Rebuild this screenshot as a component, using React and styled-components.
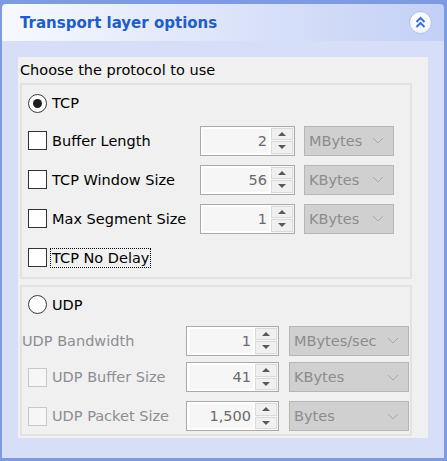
import React from 'react'
import styled, { createGlobalStyle } from 'styled-components'

const GlobalStyle = createGlobalStyle`
  body {
    margin: 0;
    font-family: "DejaVu Sans", sans-serif;
  }
`

const Frame = styled.div`
  width: 447px;
  height: 461px;
  box-sizing: border-box;
  background: #7c9be2;
  padding: 4px 3px 3px 2px;
  display: flex;
  flex-direction: column;
`

const Header = styled.div`
  height: 37px;
  flex: none;
  display: flex;
  align-items: center;
  justify-content: space-between;
  padding: 0 12px 0 18px;
  border-radius: 4px 4px 0 0;
  background: linear-gradient(to right, #f7f9fe, #c3d0f6);
`

const Title = styled.div`
  font-weight: bold;
  font-size: 15px;
  color: #215dc6;
`

const CollapseButton = styled.div`
  width: 23px;
  height: 23px;
  box-sizing: border-box;
  border-radius: 50%;
  border: 1px solid #b3c0e2;
  background: radial-gradient(circle at 40% 35%, #ffffff, #edf1fb);
  display: flex;
  align-items: center;
  justify-content: center;
`

const Body = styled.div`
  flex: 1;
  background: #d6dff7;
  padding: 16px 16px 20px 16px;
  display: flex;
  flex-direction: column;
`

const Panel = styled.div`
  flex: 1;
  background: #f0f0f0;
  padding: 0 16px 2px 2px;
  display: flex;
  flex-direction: column;
`

const Prompt = styled.div`
  height: 26px;
  line-height: 26px;
  font-size: 14.5px;
  color: #000;
`

const Group = styled.div`
  border: 2px solid #e2e2e2;
  margin-top: ${p => p.$mt || 0}px;
  display: flex;
  flex-direction: column;
`

const Row = styled.div`
  height: ${p => p.$h}px;
  margin-top: ${p => p.$mt || 0}px;
  padding-left: ${p => (p.$pl === undefined ? 6 : p.$pl)}px;
  display: flex;
  align-items: center;
  flex: none;
`

const LabelCell = styled.div`
  width: ${p => p.$w}px;
  flex: none;
  display: flex;
  align-items: center;
  gap: 5px;
`

const Label = styled.span`
  font-size: 14.5px;
  color: ${p => (p.$disabled ? '#8d8d93' : '#000')};
  white-space: nowrap;
  ${p => p.$focus && 'outline: 1px dotted #000; outline-offset: 1px;'}
`

const Box = styled.div`
  width: 19px;
  height: 19px;
  box-sizing: border-box;
  flex: none;
  border: 1.5px solid ${p => (p.$disabled ? '#c8c8c8' : '#333')};
  background: ${p => (p.$disabled ? '#f6f6f6' : '#fff')};
`

const Radio = styled.div`
  width: 19px;
  height: 19px;
  box-sizing: border-box;
  flex: none;
  border-radius: 50%;
  border: 1.5px solid #3a3a3a;
  background: #fff;
  display: flex;
  align-items: center;
  justify-content: center;
  &::after {
    content: '';
    display: ${p => (p.$checked ? 'block' : 'none')};
    width: 9px;
    height: 9px;
    border-radius: 50%;
    background: #1e1e1e;
  }
`

const Spin = styled.div`
  width: ${p => p.$w}px;
  height: 30px;
  box-sizing: border-box;
  flex: none;
  border: 1px solid #aaaaaa;
  background: #f6f6f6;
  display: flex;
`

const SpinField = styled.div`
  flex: 1;
  box-shadow: inset 0 0 0 2px #fff;
  text-align: right;
  padding-right: 4px;
  font-size: 14.5px;
  line-height: 28px;
  color: #6a6a6a;
`

const SpinButtons = styled.div`
  width: 22px;
  padding: 1px 1px 1px 0;
  display: flex;
  flex-direction: column;
  gap: 1px;
`

const SpinButton = styled.div`
  flex: 1;
  background: #f0f0f0;
  border: 1px solid #dadada;
  display: flex;
  align-items: center;
  justify-content: center;
  &::after {
    content: '';
    border-left: 4px solid transparent;
    border-right: 4px solid transparent;
    ${p =>
      p.$down
        ? 'border-top: 4px solid #5a5a5a;'
        : 'border-bottom: 4px solid #5a5a5a;'}
  }
`

const Combo = styled.div`
  width: ${p => p.$w}px;
  height: 30px;
  box-sizing: border-box;
  flex: none;
  margin-left: ${p => p.$gap}px;
  border: 1px solid #b6b6b6;
  background: #d0d0d0;
  display: flex;
  align-items: center;
  justify-content: space-between;
  padding: 0 9px 0 4px;
  font-size: 14.5px;
  color: #8c8c8c;
`

const Chevron = () => (
  <svg width="12" height="7" viewBox="0 0 12 7">
    <path d="M1 1 L6 6 L11 1" fill="none" stroke="#a9a9a9" strokeWidth="1" />
  </svg>
)

const DoubleUp = () => (
  <svg width="13" height="13" viewBox="0 0 13 13">
    <path
      d="M2.5 6 L6.5 2 L10.5 6 M2.5 11 L6.5 7 L10.5 11"
      fill="none"
      stroke="#3a6fd6"
      strokeWidth="2"
    />
  </svg>
)

const NumberBox = ({ value, width }) => (
  <Spin $w={width}>
    <SpinField>{value}</SpinField>
    <SpinButtons>
      <SpinButton />
      <SpinButton $down />
    </SpinButtons>
  </Spin>
)

const tcpOptions = [
  { label: 'Buffer Length', value: '2', unit: 'MBytes' },
  { label: 'TCP Window Size', value: '56', unit: 'KBytes' },
  { label: 'Max Segment Size', value: '1', unit: 'KBytes' },
]

const udpOptions = [
  { label: 'UDP Buffer Size', value: '41', unit: 'KBytes', h: 36 },
  { label: 'UDP Packet Size', value: '1,500', unit: 'Bytes', h: 36, mt: 3 },
]

const App = () => (
  <Frame>
    <GlobalStyle />
    <Header>
      <Title>Transport layer options</Title>
      <CollapseButton>
        <DoubleUp />
      </CollapseButton>
    </Header>
    <Body>
      <Panel>
        <Prompt>Choose the protocol to use</Prompt>
        <Group>
          <Row $h={36}>
            <LabelCell $w={172}>
              <Radio $checked />
              <Label>TCP</Label>
            </LabelCell>
          </Row>
          {tcpOptions.map(opt => (
            <Row $h={39} key={opt.label}>
              <LabelCell $w={172}>
                <Box />
                <Label>{opt.label}</Label>
              </LabelCell>
              <NumberBox value={opt.value} width={95} />
              <Combo $w={90} $gap={9}>
                {opt.unit}
                <Chevron />
              </Combo>
            </Row>
          ))}
          <Row $h={39}>
            <LabelCell $w={172}>
              <Box />
              <Label $focus>TCP No Delay</Label>
            </LabelCell>
          </Row>
        </Group>
        <Group $mt={6}>
          <Row $h={35}>
            <LabelCell $w={158}>
              <Radio />
              <Label>UDP</Label>
            </LabelCell>
          </Row>
          <Row $h={37} $pl={0}>
            <LabelCell $w={164}>
              <Label $disabled>UDP Bandwidth</Label>
            </LabelCell>
            <NumberBox value="1" width={93} />
            <Combo $w={120} $gap={10}>
              MBytes/sec
              <Chevron />
            </Combo>
          </Row>
          {udpOptions.map(opt => (
            <Row $h={opt.h} $mt={opt.mt} key={opt.label}>
              <LabelCell $w={158}>
                <Box $disabled />
                <Label $disabled>{opt.label}</Label>
              </LabelCell>
              <NumberBox value={opt.value} width={93} />
              <Combo $w={120} $gap={10}>
                {opt.unit}
                <Chevron />
              </Combo>
            </Row>
          ))}
        </Group>
      </Panel>
    </Body>
  </Frame>
)

export default App
